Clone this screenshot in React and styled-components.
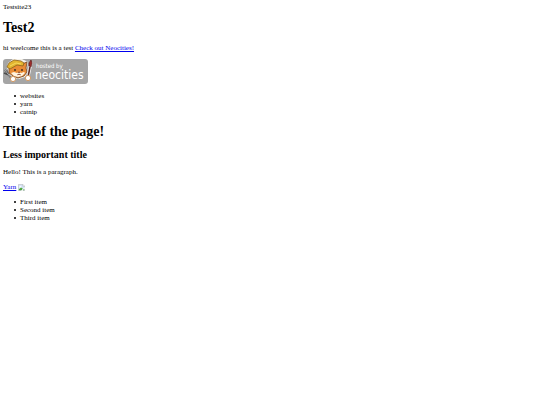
import React from 'react'
import styled, { createGlobalStyle } from 'styled-components';

const toys = ['websites', 'yarn', 'catnip'];
const items = ['First item', 'Second item', 'Third item'];

const NeocitiesBadge = () => {
  return (
    <BadgeSvg viewBox="0 0 85 25" role="img" aria-label="Hosted by Neocities">
      <rect width="85" height="25" rx="3" fill="#a5a5a5" />
      {/* fork */}
      <path d="M2 11l3 4M5 9l1 6M1 14l5 2M5 15l4 5" stroke="#4d4d4d" strokeWidth="1.8" fill="none" />
      <path d="M2 11l3 4M5 15l4 5" stroke="#dcdcdc" strokeWidth="0.7" />
      {/* cat head */}
      <path d="M4 9l1-5 5-4 9 0 6 3-1 6 1 4-3 5-6 2-6-1-4-4z" fill="#f5f1e8" />
      <path d="M6 9l4-4h9l5-2-1 6 1 4-3 4-6 2-5-2-4-3z" fill="#e98b35" stroke="#6d4326" strokeWidth="0.8" />
      <path d="M8 14l3-1 3 1 2-1 2 1 3-1 1 1-3 3-4 1-4-1z" fill="#fff3df" />
      <path d="M4 8l2-4 5-3 7 1 3 2-1 3-6-1-7 4z" fill="#e3b52f" stroke="#8c611a" strokeWidth="0.8" />
      <path d="M7 7l6-3 5 1" stroke="#f7db63" strokeWidth="0.9" fill="none" />
      <circle cx="12" cy="11" r="0.9" fill="#35251c" />
      <circle cx="19" cy="11" r="0.9" fill="#35251c" />
      <path d="M15 13h2l-1 1zM14 16l2-1 2 1" fill="#86452d" stroke="#86452d" strokeWidth="0.5" />
      {/* brush */}
      <path d="M28 4l-3 14" stroke="#fff" strokeWidth="3" strokeLinecap="round" />
      <path d="M27 8l-2 10" stroke="#5e2f27" strokeWidth="1.6" />
      <path d="M26 7V4l2-3 1 3-1 4z" fill="#9c2b2b" stroke="#5b1e1c" strokeWidth="0.7" />
      {/* paws */}
      <circle cx="10" cy="20" r="2.6" fill="#fff" stroke="#d08a48" strokeWidth="0.8" />
      <circle cx="25" cy="19" r="2.6" fill="#fff" stroke="#d08a48" strokeWidth="0.8" />
      <BadgeText x="33" y="9" $size={6}>hosted by</BadgeText>
      <BadgeText x="32" y="20" $size={12}>neocities</BadgeText>
    </BadgeSvg>
  )
}

const BrokenImage = () => {
  return (
    <BrokenSvg viewBox="0 0 16 16" aria-hidden="true">
      <path d="M1 1h10l4 4v10H1z" fill="#d3e2f7" stroke="#a3a3a3" />
      <path d="M11 1v4h4" fill="#fff" stroke="#a3a3a3" />
      <path d="M3 6q2-4 4 0h1v2H3z" fill="#fff" />
      <path d="M2 14v-2l5-4 4 3-3 3z" fill="#4ea63c" />
      <path d="M16 7L7 16h3l6-6z" fill="#fff" />
      <path d="M11 14l3-3v3z" fill="#4ea63c" />
    </BrokenSvg>
  )
}

const App = () => {
  return (
    <>
      <GlobalStyle />
      <Page>
        <SiteName>Testsite23</SiteName>
        <Title>Test2</Title>
        <Line>
          hi weelcome this is a test <Link href="https://neocities.org">Check out Neocities!</Link>
        </Line>
        <Badge href="https://neocities.org">
          <NeocitiesBadge />
        </Badge>
        <List>
          {toys.map((toy) => <Item key={toy}>{toy}</Item>)}
        </List>

        <Title>Title of the page!</Title>
        <Subtitle>Less important title</Subtitle>
        <Line>Hello! This is a paragraph.</Line>
        <Line>
          <Link href="#yarn">Yarn</Link> <BrokenImage />
        </Line>
        <List>
          {items.map((item) => <Item key={item}>{item}</Item>)}
        </List>
      </Page>
    </>
  )
}

const GlobalStyle = createGlobalStyle`
  body {
    margin: 0;
    background: #fff;
    color: #000;
    font-family: "Liberation Serif", "Times New Roman", serif;
    font-size: 7px;
    line-height: 8px;
  }
`;

const Page = styled.main`
  padding: 3px;
`;

const SiteName = styled.div`
  margin-bottom: 9px;
`;

const Line = styled.p`
  margin: 0 0 7px;
`;

const Title = styled.h1`
  margin: 8px 0;
  font-size: 14px;
  line-height: 16px;
`;

const Subtitle = styled.h2`
  margin: 9px 0 7px;
  font-size: 10px;
  line-height: 12px;
`;

const Link = styled.a`
  color: #0000ee;
`;

const Badge = styled.a`
  display: block;
  width: fit-content;
  margin-bottom: 8px;
`;

const BadgeSvg = styled.svg`
  display: block;
  width: 85px;
  height: 25px;
`;

const BadgeText = styled.text`
  fill: #fff;
  font-family: "DejaVu Sans Condensed", "Open Sans", sans-serif;
  font-size: ${({ $size }) => $size}px;
`;

const BrokenSvg = styled.svg`
  width: 7px;
  height: 7px;
  vertical-align: bottom;
`;

const List = styled.ul`
  margin: 7px 0 8px;
  padding-left: 11px;
  list-style: none;
`;

const Item = styled.li`
  display: flex;
  align-items: center;
  gap: 4px;

  &::before {
    content: '';
    width: 2px;
    height: 2px;
    border-radius: 1px;
    background: #000;
  }
`;

export default App
